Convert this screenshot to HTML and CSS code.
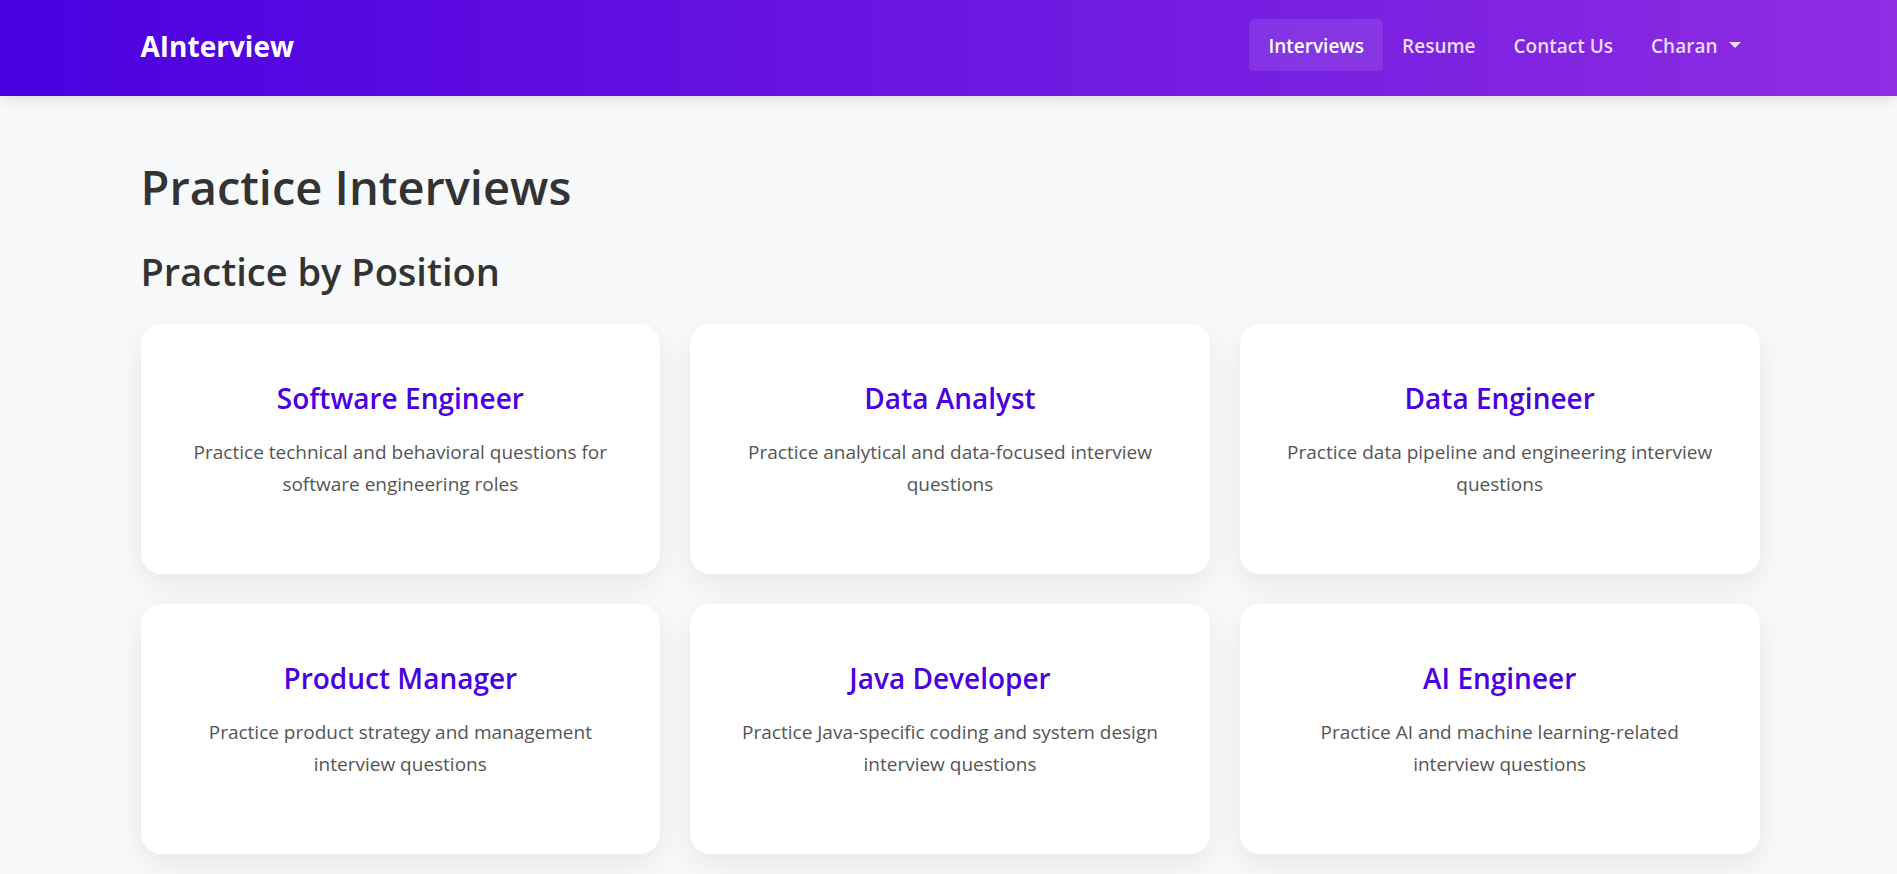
FILE: index.html
```html
<!DOCTYPE html>
<html lang="en">
<head>
<meta charset="utf-8">
<meta name="viewport" content="width=device-width, initial-scale=1">
<title>AInterview</title>
<link rel="stylesheet" href="styles.css">
</head>
<body>
<header class="navbar">
  <div class="container navbar-inner">
    <a class="brand" href="#">AInterview</a>
    <nav class="nav">
      <a class="nav-link active" href="#" aria-current="page">Interviews</a>
      <a class="nav-link" href="#">Resume</a>
      <a class="nav-link" href="#">Contact Us</a>
      <button class="nav-link" type="button" aria-haspopup="true">Charan<span class="caret"></span></button>
    </nav>
  </div>
</header>
<main class="container content">
  <h1>Practice Interviews</h1>
  <h2>Practice by Position</h2>
  <div class="cards">
    <a class="card" href="#"><h3>Software Engineer</h3><p>Practice technical and behavioral questions for software engineering roles</p></a>
    <a class="card" href="#"><h3>Data Analyst</h3><p>Practice analytical and data-focused interview questions</p></a>
    <a class="card" href="#"><h3>Data Engineer</h3><p>Practice data pipeline and engineering interview questions</p></a>
    <a class="card" href="#"><h3>Product Manager</h3><p>Practice product strategy and management interview questions</p></a>
    <a class="card" href="#"><h3>Java Developer</h3><p>Practice Java-specific coding and system design interview questions</p></a>
    <a class="card" href="#"><h3>AI Engineer</h3><p>Practice AI and machine learning-related interview questions</p></a>
  </div>
</main>
</body>
</html>
```
FILE: styles.css
```css
* { box-sizing: border-box; }
html { overflow-x: hidden; scrollbar-width: none; }
body {
  margin: 0;
  background: #f8f9fa;
  color: #333;
  font-family: "Open Sans", "Noto Sans", sans-serif;
  font-size: 19px;
  line-height: 32px;
}
.container { width: 100%; max-width: 1650px; margin: 0 auto; padding: 0 14px 0 17px; }
.navbar {
  background: linear-gradient(90deg, #4a00e0, #8e2de2);
  box-shadow: 0 4px 12px rgba(0, 0, 0, 0.1);
}
.navbar-inner { display: flex; align-items: center; justify-content: space-between; min-height: 96px; padding-bottom: 6px; }
.brand { padding-top: 2px; color: #fff; font-size: 28px; font-weight: 700; text-decoration: none; }
.nav { display: flex; }
.nav-link {
  padding: 11px 19px 9px;
  border: 0;
  border-radius: 5px;
  background: none;
  color: rgba(255, 255, 255, 0.85);
  font: 600 19px/32px "Open Sans", "Noto Sans", sans-serif;
  text-decoration: none;
}
.nav-link.active { background: rgba(255, 255, 255, 0.1); color: #fff; }
.caret {
  display: inline-block;
  margin-left: 11px;
  border: 6px solid transparent;
  border-top-color: currentColor;
  border-bottom: 0;
  vertical-align: 5px;
}
.content { padding-top: 61px; padding-bottom: 40px; }
h1 { margin: 0 0 30px; font-size: 47px; font-weight: 600; line-height: 60px; }
h2 { margin: 0 0 29px; font-size: 38px; font-weight: 600; line-height: 48px; }
.cards { display: grid; grid-template-columns: repeat(3, 1fr); gap: 30px; }
.card {
  min-height: 250px;
  padding: 56px 40px 40px;
  border-radius: 20px;
  background: #fff;
  box-shadow: 0 10px 30px rgba(0, 0, 0, 0.08);
  color: #555;
  text-align: center;
  text-decoration: none;
}
.card h3 { margin: 0 0 20px; color: #4a00e0; font-size: 28px; font-weight: 600; line-height: 36px; }
.card p { margin: 0; }
```
